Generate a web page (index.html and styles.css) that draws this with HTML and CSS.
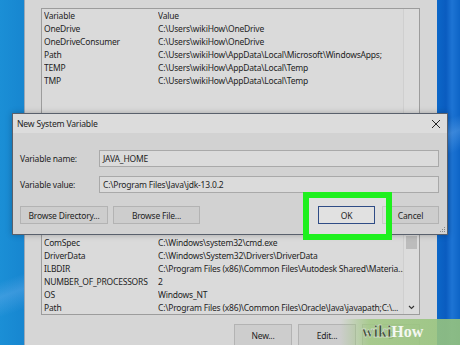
FILE: index.html
```html
<!DOCTYPE html>
<html>
<head>
	<title>Environment Variables</title>
	<meta charset="UTF-8">
	<link rel="stylesheet" href="styles.css">
</head>
<body>
	<div class="desktop">
		<div class="env-window">
			<div class="listbox upper">
				<div class="rows">
					<div class="row head"><span>Variable</span><span>Value</span></div>
					<div class="row"><span>OneDrive</span><span>C:\Users\wikiHow\OneDrive</span></div>
					<div class="row"><span>OneDriveConsumer</span><span>C:\Users\wikiHow\OneDrive</span></div>
					<div class="row"><span>Path</span><span>C:\Users\wikiHow\AppData\Local\Microsoft\WindowsApps;</span></div>
					<div class="row"><span>TEMP</span><span>C:\Users\wikiHow\AppData\Local\Temp</span></div>
					<div class="row"><span>TMP</span><span>C:\Users\wikiHow\AppData\Local\Temp</span></div>
				</div>
				<div class="scrollbar"></div>
			</div>

			<div class="window-buttons user-buttons">
				<button class="btn">New...</button>
				<button class="btn">Edit...</button>
				<button class="btn">Delete</button>
			</div>
			<div class="group-label">System variables</div>

			<div class="listbox lower">
				<div class="rows">
					<div class="row head"><span>Variable</span><span>Value</span></div>
					<div class="row"><span>ComSpec</span><span>C:\Windows\system32\cmd.exe</span></div>
					<div class="row"><span>DriverData</span><span>C:\Windows\System32\Drivers\DriverData</span></div>
					<div class="row"><span>ILBDIR</span><span>C:\Program Files (x86)\Common Files\Autodesk Shared\Materia...</span></div>
					<div class="row"><span>NUMBER_OF_PROCESSORS</span><span>2</span></div>
					<div class="row"><span>OS</span><span>Windows_NT</span></div>
					<div class="row"><span>Path</span><span>C:\Program Files (x86)\Common Files\Oracle\Java\javapath;C:\...</span></div>
				</div>
				<div class="scrollbar">
					<div class="thumb"></div>
					<svg class="chevron" width="7" height="5" viewBox="0 0 7 5"><path d="M1 1 L3.5 3.5 L6 1" fill="none" stroke="#333" stroke-width="1.1"/></svg>
				</div>
			</div>

			<div class="window-buttons">
				<button class="btn">New...</button>
				<button class="btn">Edit...</button>
				<button class="btn">D</button>
			</div>
		</div>

		<div class="dialog">
			<div class="dialog-title">
				<span>New System Variable</span>
				<svg class="close" width="10" height="10" viewBox="0 0 10 10"><path d="M1 1 L9 9 M9 1 L1 9" stroke="#222" stroke-width="1"/></svg>
			</div>
			<div class="dialog-body">
				<div class="field">
					<label class="field-label">Variable name:</label>
					<div class="field-input">JAVA_HOME</div>
				</div>
				<div class="field">
					<label class="field-label">Variable value:</label>
					<div class="field-input">C:\Program Files\Java\jdk-13.0.2</div>
				</div>
				<div class="dialog-buttons">
					<button class="btn browse-dir">Browse Directory...</button>
					<button class="btn browse-file">Browse File...</button>
					<span class="spacer"></span>
					<button class="btn ok">OK</button>
					<button class="btn cancel">Cancel</button>
				</div>
			</div>
			<svg class="grip" width="7" height="7" viewBox="0 0 7 7">
				<rect x="5" y="1" width="1" height="1" fill="#888"/>
				<rect x="3" y="3" width="1" height="1" fill="#888"/>
				<rect x="5" y="3" width="1" height="1" fill="#888"/>
				<rect x="1" y="5" width="1" height="1" fill="#888"/>
				<rect x="3" y="5" width="1" height="1" fill="#888"/>
				<rect x="5" y="5" width="1" height="1" fill="#888"/>
			</svg>
		</div>

		<div class="highlight"></div>

		<div class="watermark"><span class="wiki">wiki</span><span class="how">How</span></div>
	</div>
</body>
</html>
```

FILE: styles.css
```css
body {
	margin: 0;
	font-family: "Noto Sans", sans-serif;
	font-size: 8.5px;
	letter-spacing: -0.2px;
	color: #1e1e1e;
}

.desktop {
	position: relative;
	width: 460px;
	height: 345px;
	overflow: hidden;
	background:
		linear-gradient(160deg, rgba(255, 255, 255, 0) 55%, rgba(120, 180, 240, 0.35) 58%, rgba(255, 255, 255, 0) 62%),
		linear-gradient(90deg, #1b8fd6 0px, #1786d0 24px, #0c67c8 437px, #0a5cc0 446px, #1d74d4 452px, #0d64c6 460px);
}

.env-window {
	box-sizing: border-box;
	width: 413px;
	height: 345px;
	margin-left: 24px;
	padding: 8px 17px 0 16px;
	background-color: #d6d6d6;
	border-left: 1px solid #9aa7b6;
}

.listbox {
	display: flex;
	background-color: #dadada;
	border: 1px solid #9c9c9c;
}

.listbox.upper {
	height: 117px;
}

.rows {
	flex: 1;
	padding-left: 2px;
	overflow: hidden;
}

.row {
	display: grid;
	grid-template-columns: 114px 1fr;
	height: 13px;
	line-height: 13px;
	white-space: nowrap;
}

.row span {
	overflow: hidden;
}

.scrollbar {
	position: relative;
	width: 15px;
	background-color: #dcdcdc;
	border-left: 1px solid #cfcfcf;
}

.thumb {
	height: 13px;
	margin: 13px 2px 0 2px;
	background-color: #bcbcbc;
}

.chevron {
	position: absolute;
	left: 4px;
	bottom: 4px;
}

.window-buttons {
	display: flex;
	justify-content: flex-end;
	gap: 6px;
	margin-top: 9px;
}

.user-buttons {
	margin-top: 8px;
}

.group-label {
	margin-top: 10px;
	height: 13px;
	line-height: 13px;
}

.listbox.lower {
	margin-top: 42px;
	height: 93px;
	box-sizing: border-box;
}

.btn {
	box-sizing: border-box;
	width: 58px;
	height: 22px;
	padding: 0;
	font-family: inherit;
	font-size: inherit;
	letter-spacing: inherit;
	color: #1e1e1e;
	background-color: #cdcdcd;
	border: 1px solid #b3b3b3;
}

.dialog {
	position: absolute;
	left: 12px;
	top: 113px;
	width: 436px;
	height: 122px;
	box-sizing: border-box;
	background-color: #d2d2d2;
	border: 1px solid #59606c;
	box-shadow: 0 0 6px rgba(0, 0, 0, 0.25);
}

.dialog-title {
	display: flex;
	align-items: center;
	justify-content: space-between;
	height: 19px;
	padding: 0 6px 0 4px;
	background-color: #dcdcdc;
	font-size: 8.6px;
}

.dialog-body {
	padding: 17px 8px 0 7px;
}

.field {
	display: flex;
	align-items: center;
	margin-bottom: 9px;
}

.field-label {
	width: 79px;
	flex: none;
}

.field-input {
	flex: 1;
	box-sizing: border-box;
	height: 17px;
	line-height: 15px;
	padding-left: 3px;
	background-color: #dbdbdb;
	border: 1px solid #a9a9a9;
}

.dialog-buttons {
	display: flex;
	gap: 5px;
	margin-top: 13px;
}

.dialog-buttons .btn {
	flex: none;
	height: 18px;
	width: 57px;
}

.dialog-buttons .browse-dir {
	width: 88px;
}

.dialog-buttons .browse-file {
	width: 87px;
}

.dialog-buttons .cancel {
	margin-left: 2px;
}

.spacer {
	flex: 1;
}

.dialog-buttons .ok {
	position: relative;
	z-index: 2;
	background-color: #e1e1e1;
	border: 1px solid #2f4c86;
}

.grip {
	position: absolute;
	right: 1px;
	bottom: 1px;
}

.highlight {
	position: absolute;
	left: 303px;
	top: 192px;
	width: 89px;
	height: 48px;
	box-sizing: border-box;
	border: 6px solid #1ef01e;
	background-color: rgba(255, 255, 255, 0.3);
	z-index: 1;
}

.watermark {
	position: absolute;
	right: 0;
	bottom: 0;
	width: 120px;
	height: 26px;
	padding-left: 22px;
	box-sizing: border-box;
	background: linear-gradient(90deg, rgba(160, 195, 125, 0) 0px, rgba(160, 200, 130, 0.85) 30px, rgba(150, 195, 125, 0.9) 100%);
	font-family: "Liberation Serif", serif;
	font-weight: bold;
	font-size: 16px;
	letter-spacing: 0;
	line-height: 26px;
	z-index: 3;
}

.wiki {
	color: #3b4a33;
	-webkit-text-stroke: 0.4px #eef5ea;
}

.how {
	color: #f4f8f2;
}
```
